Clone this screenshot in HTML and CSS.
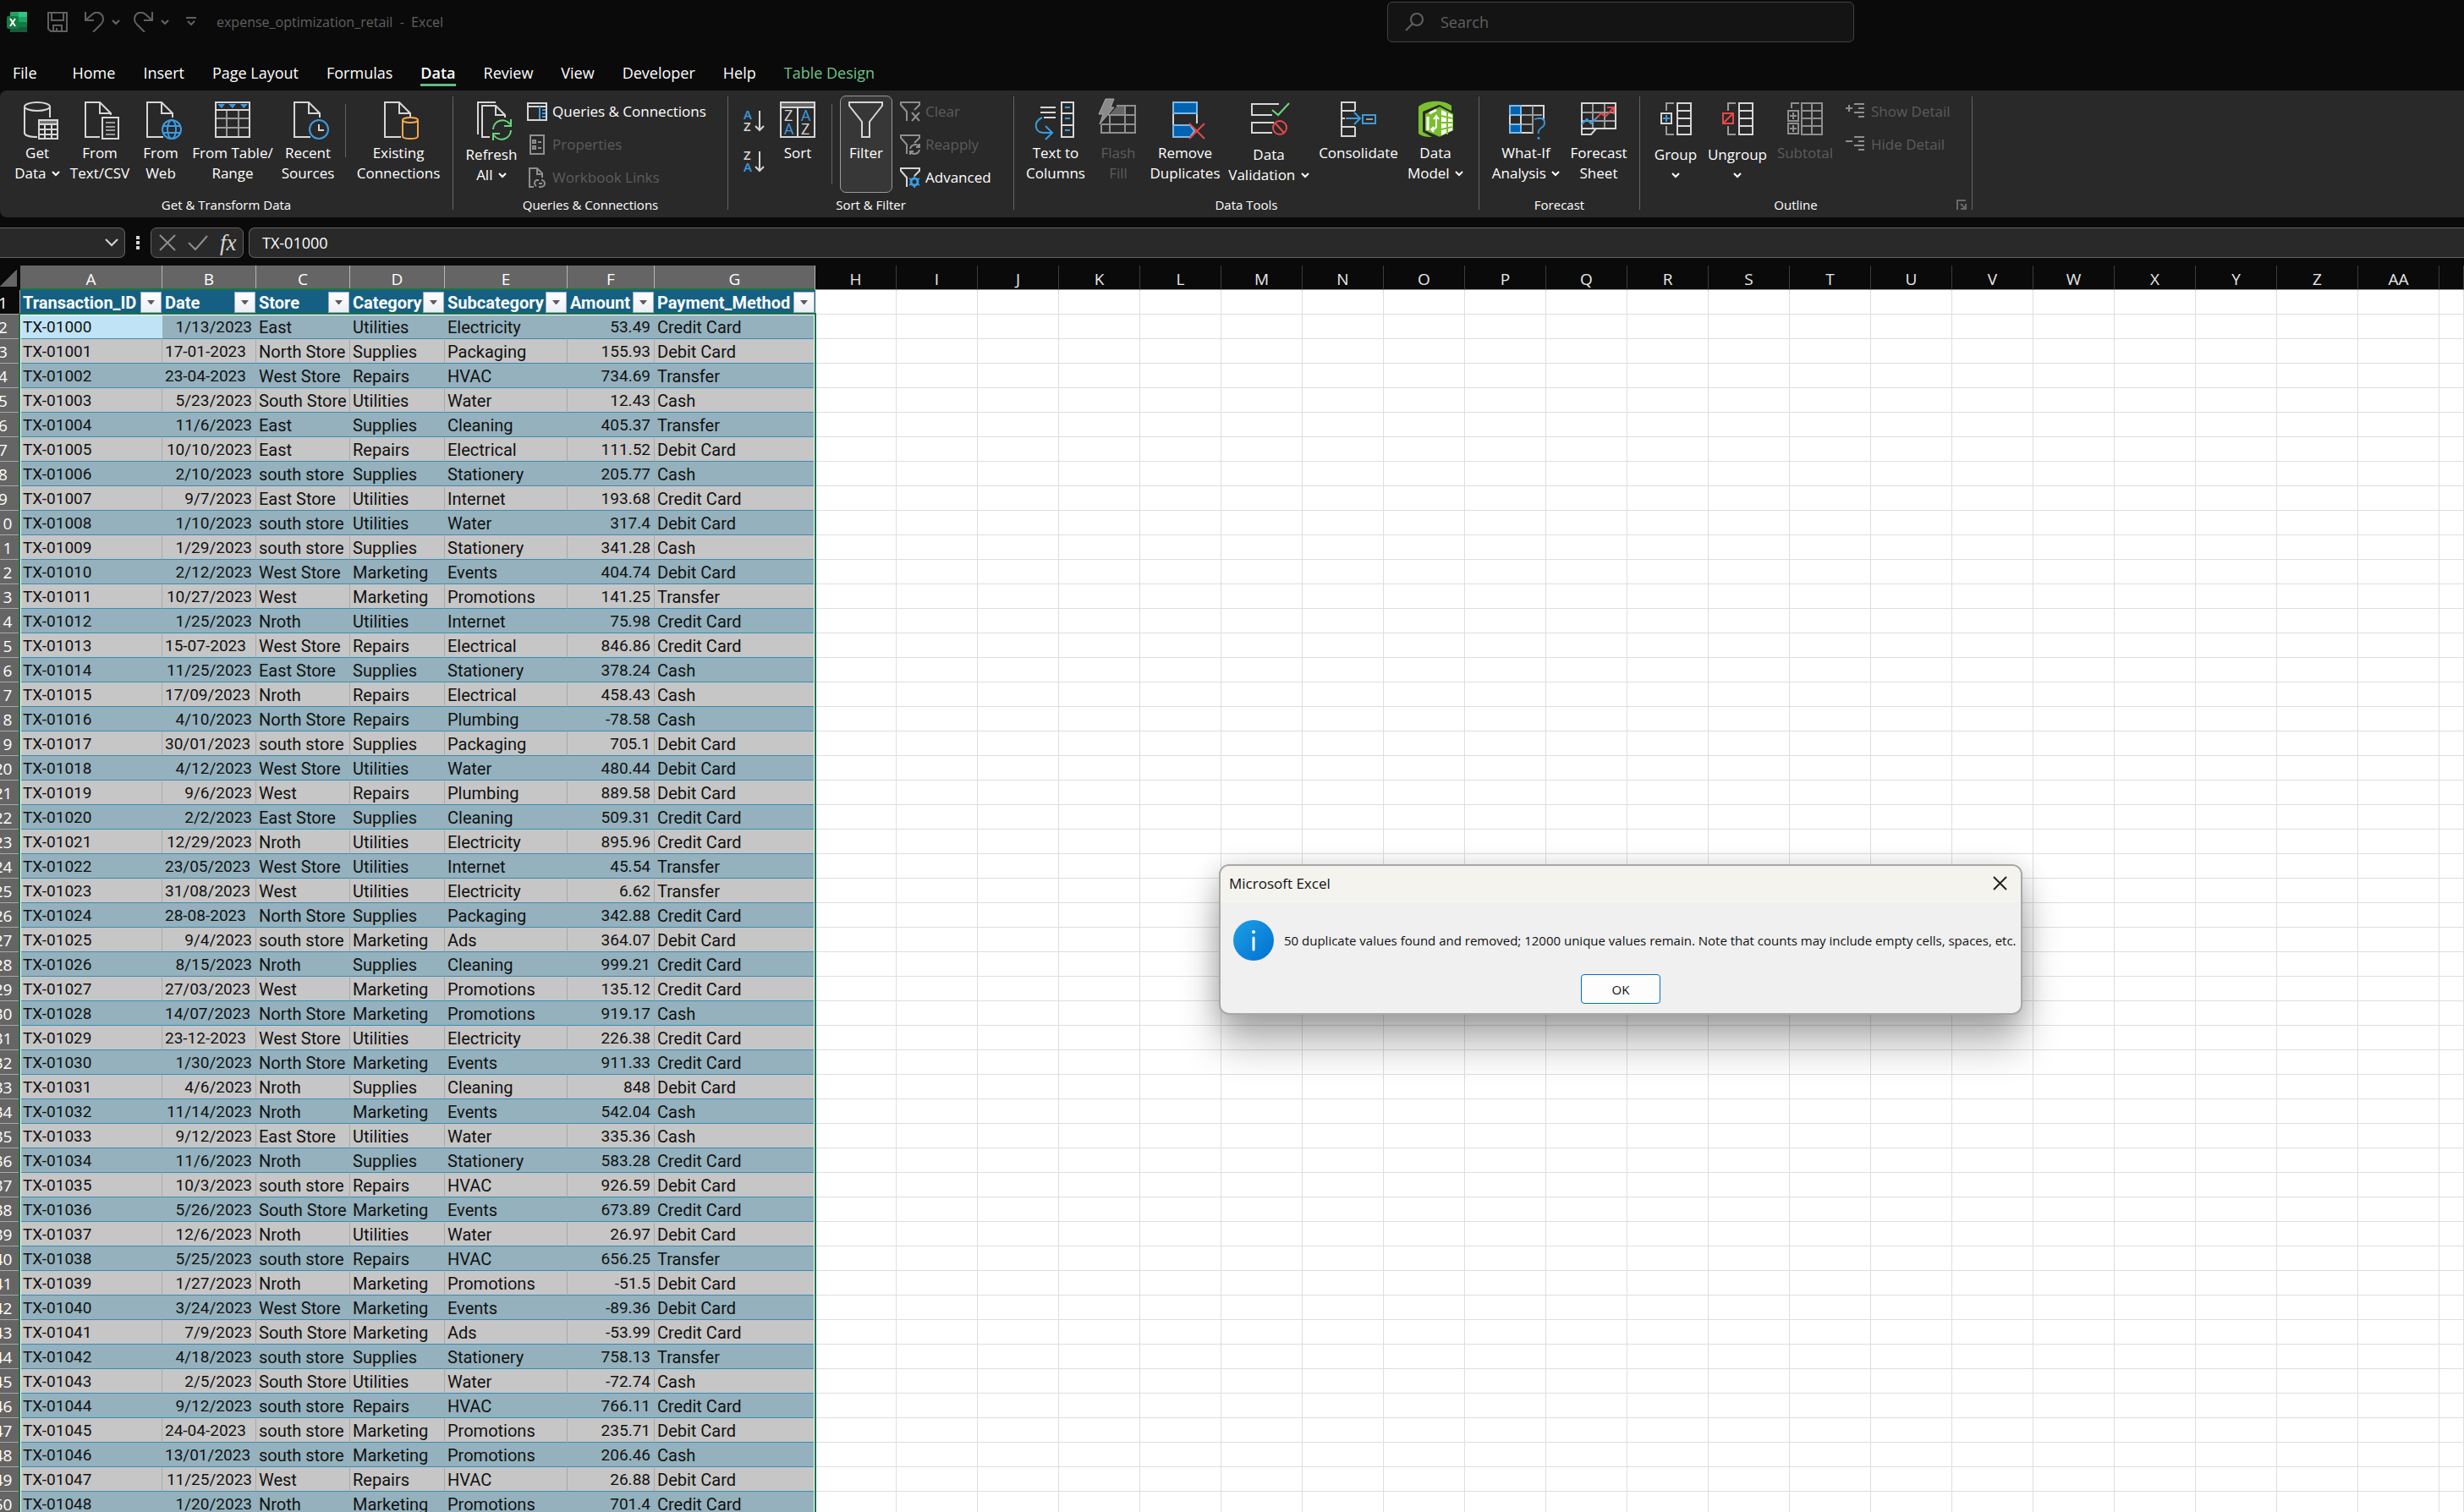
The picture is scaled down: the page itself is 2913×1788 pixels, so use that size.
FILE: index.html
```html
<!DOCTYPE html>
<html lang="en">
<head>
<meta charset="utf-8">
<title>expense_optimization_retail - Excel</title>
<link rel="stylesheet" href="styles.css">
</head>
<body>
<svg class="defs" aria-hidden="true">
  <symbol id="doc" viewBox="0 0 48 48"><path class="w" d="M27 43H8V2h17l13 13v5M25 2v13h13"/></symbol>
  <symbol id="chev" viewBox="0 0 10 8"><path d="M1 2l4 4 4-4" fill="none" stroke="currentColor" stroke-width="2"/></symbol>
  <symbol id="funnel" viewBox="0 0 24 24"><path d="M8 23V12L1 4V1h22v3l-6 6" fill="none" stroke="currentColor" stroke-width="2"/></symbol>
</svg>

<header class="title-bar">
  <div class="quick">
    <svg class="logo" width="24" height="24" viewBox="0 0 24 24" aria-label="Excel"><rect x="4" width="20" height="24" rx="1" fill="#21a366"/><path d="M14 0h9a1 1 0 0 1 1 1v5H14z" fill="#33c481"/><path d="M14 12h10v6H14z" fill="#107c41"/><path d="M4 18h20v5a1 1 0 0 1-1 1H5a1 1 0 0 1-1-1z" fill="#185c37"/><rect y="5" width="14" height="15" rx="2" fill="#107c41"/><path d="M4 8l6 9M10 8l-6 9" stroke="#fff" stroke-width="2"/></svg>
    <button class="qbtn save" aria-label="Save"><svg width="24" height="24" viewBox="0 0 24 24"><path d="M1 1h22v22H4l-3-3zM5 1v9h14V1M7 23v-7h10v7M11 19v4"/></svg></button>
    <button class="qbtn undo" aria-label="Undo"><svg width="24" height="24" viewBox="0 0 24 24"><path d="M1 0v10h10M1 10L9 3c6-5 13-1 13 6 0 3-1 4-3 6l-9 9"/></svg></button>
    <button class="qbtn" aria-label="Undo list"><svg width="10" height="8"><use href="#chev"/></svg></button>
    <button class="qbtn redo" aria-label="Redo"><svg width="24" height="24" viewBox="0 0 24 24"><path d="M22 0v10H12M22 10l-8-7C8-2 1 2 1 9c0 3 1 4 3 6l9 9"/></svg></button>
    <button class="qbtn" aria-label="Redo list"><svg width="10" height="8"><use href="#chev"/></svg></button>
    <button class="qbtn more" aria-label="Customize toolbar"><svg width="12" height="12" viewBox="0 0 12 12"><path d="M0 1h12M2 5l4 4 4-4"/></svg></button>
    <span class="file-name">expense_optimization_retail&nbsp; -&nbsp; Excel</span>
  </div>
  <label class="search">
    <svg width="22" height="22" viewBox="0 0 22 22"><circle cx="14" cy="8" r="7"/><path d="M9 13l-8 8"/></svg>
    <input type="search" placeholder="Search" aria-label="Search">
  </label>
</header>

<nav class="tabs">
  <a href="#file" class="file">File</a>
  <a href="#home">Home</a>
  <a href="#insert">Insert</a>
  <a href="#layout">Page Layout</a>
  <a href="#formulas">Formulas</a>
  <a href="#data" class="active">Data</a>
  <a href="#review">Review</a>
  <a href="#view">View</a>
  <a href="#developer">Developer</a>
  <a href="#help">Help</a>
  <a href="#design" class="context">Table Design</a>
</nav>

<section class="ribbon">
  <div class="group g-get">
    <div class="tools">
      <button class="big w72"><svg class="i" viewBox="0 0 48 48"><ellipse class="w" cx="24" cy="7" rx="15" ry="5"/><path class="w" d="M9 7v31c0 3 6 5 15 5M39 7v13"/><path d="M26 22h22v5H26z" fill="#777"/><path class="w" d="M26 23h22v22H26zM26 28h22M26 34h22M26 40h22M33 28v17M41 28v17"/></svg><span>Get</span><span>Data <svg class="chev"><use href="#chev"/></svg></span></button>
      <button class="big w76"><svg class="i" viewBox="0 0 48 48"><path class="w" d="M24 43H7V2h17l13 13v2M24 2v13h13"/><path class="w" d="M27 20h19v25H27z"/><path class="g" d="M31 26h11M31 31h11M31 35h11M31 40h11"/></svg><span>From</span><span>Text/CSV</span></button>
      <button class="big w68"><svg class="i" viewBox="0 0 48 48"><use href="#doc"/><g class="b"><circle cx="37" cy="34" r="11"/><ellipse cx="37" cy="34" rx="5" ry="11"/><path d="M27 30h20M27 38h20"/></g></svg><span>From</span><span>Web</span></button>
      <button class="big w102"><svg class="i" viewBox="0 0 48 48"><path class="g" d="M17 11v32M31 11v32M4 21h40M4 32h40"/><path class="w" d="M4 2h40v41H4zM4 11h40"/><path d="M6 4h9l-4 5zM19 4h9l-4 5zM33 4h9l-5 5z" fill="#3a9be0"/></svg><span>From Table/</span><span>Range</span></button>
      <button class="big w76"><svg class="i" viewBox="0 0 48 48"><use href="#doc"/><circle class="b" cx="37" cy="34" r="11"/><path class="w" d="M37 28v7h6"/></svg><span>Recent</span><span>Sources</span></button>
      <i class="rule short"></i>
      <button class="big w112"><svg class="i" viewBox="0 0 48 48"><use href="#doc"/><g class="o"><ellipse cx="38" cy="23" rx="9" ry="3"/><path d="M29 23v19c0 4 18 4 18 0V23"/></g></svg><span>Existing</span><span>Connections</span></button>
    </div>
    <div class="caption">Get &amp; Transform Data</div>
  </div>
  <i class="rule"></i>
  <div class="group g-query">
    <div class="tools">
      <button class="big w74 split"><svg class="i" viewBox="0 0 48 48"><path class="w" d="M8 40V2h21M22 43h-9V6h16l11 11v3M29 6v11h11"/><g class="n"><path d="M26 34a11 11 0 0 1 20-6M47 35a11 11 0 0 1-20 6M47 22v8h-8M26 47v-8h8"/></g></svg><span>Refresh</span><span>All <svg class="chev"><use href="#chev"/></svg></span></button>
      <div class="list">
        <button class="small"><svg viewBox="0 0 24 24"><path class="w" d="M1 2h22v20H1zM1 6h22"/><path class="b" d="M15 6v15M18 10h4M18 14h4M18 18h4"/></svg>Queries &amp; Connections</button>
        <button class="small" disabled><svg viewBox="0 0 24 24"><path class="d" d="M4 1h16v22H4zM7 7h3v3H7zM7 14h3v3H7zM13 9h4M13 16h4"/></svg>Properties</button>
        <button class="small" disabled><svg viewBox="0 0 24 24"><path class="d" d="M8 23H3V1h9l6 6v5M12 1v7h6M11 22a4 4 0 0 1 0-7h3M17 15a4 4 0 0 1 0 8h-3M14 19h4"/></svg>Workbook Links</button>
      </div>
    </div>
    <div class="caption">Queries &amp; Connections</div>
  </div>
  <i class="rule"></i>
  <div class="group g-sort">
    <div class="tools">
      <div class="az">
        <button aria-label="Sort A to Z"><svg width="26" height="30" viewBox="0 0 26 30"><text x="1" y="14" fill="#3a9be0">A</text><text x="1" y="28" fill="#d6d6d6">Z</text><path class="w" d="M20 4v23M15 22l5 5 5-5"/></svg></button>
        <button aria-label="Sort Z to A"><svg width="26" height="30" viewBox="0 0 26 30"><text x="1" y="14" fill="#d6d6d6">Z</text><text x="1" y="28" fill="#3a9be0">A</text><path class="w" d="M20 4v23M15 22l5 5 5-5"/></svg></button>
      </div>
      <button class="big w72"><svg class="i" viewBox="0 0 48 48"><path d="M4 2h40v6H4z" fill="#666"/><path class="w" d="M4 2h40v41H4zM4 8h40M24 8v35"/><g font-size="18"><text x="8" y="24" fill="#d6d6d6">Z</text><text x="8" y="40" fill="#3a9be0">A</text><text x="28" y="24" fill="#3a9be0">A</text><text x="28" y="40" fill="#d6d6d6">Z</text></g></svg><span>Sort</span></button>
      <i class="rule mid"></i>
      <button class="big filter" aria-pressed="true"><svg class="i" viewBox="0 0 48 48"><path class="w" d="M4 2h39v4L28 25v18h-9V25L4 6z"/></svg><span>Filter</span></button>
      <div class="list">
        <button class="small" disabled><svg viewBox="0 0 24 24"><use href="#funnel"/><path class="d" d="M14 13l9 10M23 13l-9 10"/></svg>Clear</button>
        <button class="small" disabled><svg viewBox="0 0 24 24"><use href="#funnel"/><path class="d" d="M12 17a6 6 0 0 1 11-2M23 18a6 6 0 0 1-11 2M23 11v4h-4M12 24v-4h4"/></svg>Reapply</button>
        <button class="small"><svg viewBox="0 0 24 24"><use href="#funnel"/><circle cx="17" cy="17" r="4" fill="none" stroke="#3a9be0" stroke-width="3"/><path class="b" d="M17 10v3M17 21v3M11 13l3 2M20 19l3 2M11 21l3-2M20 15l3-2"/></svg>Advanced</button>
      </div>
    </div>
    <div class="caption">Sort &amp; Filter</div>
  </div>
  <i class="rule"></i>
  <div class="group g-tools">
    <div class="tools">
      <button class="big w82"><svg class="i" viewBox="0 0 48 48"><path class="w" d="M6 8h18M6 14h18M10 20h14M31 2h14v41H31zM31 15h14M31 29h14"/><path class="b" d="M35 8h6M35 21h6M35 35h6M8 20C-3 25-1 38 10 38h9M12 30l8 8-8 8"/></svg><span>Text to</span><span>Columns</span></button>
      <button class="big w66" disabled><svg class="i" viewBox="0 0 48 48"><path d="M18 12l5-6h9v10H14z" fill="#666"/><path class="d" d="M22 6h22v32H4V28M14 18v20M32 6v32M12 17h32M4 28h40"/><path d="M9-2h10l-4 10h4L2 28l4-12H1z" fill="#8a8a8a" stroke="#aaa"/></svg><span>Flash</span><span>Fill</span></button>
      <button class="big w92"><svg class="i" viewBox="0 0 48 48"><path class="w" d="M10 15v14M38 15v12"/><path d="M10 2h28v13H10zM10 29h20l5 7-5 7H10z" fill="#0063b1" stroke="#7db9e8" stroke-width="2"/><path class="r" d="M29 27l18 18M47 27L29 45"/></svg><span>Remove</span><span>Duplicates</span></button>
      <button class="big w106 split"><svg class="i" viewBox="0 0 48 48"><path class="w" d="M36 4H4v13h24M30 26H4v12h24"/><path class="n" d="M28 11l7 6L48 3"/><g class="r"><circle cx="37" cy="32" r="8"/><path d="M31 26l11 12"/></g></svg><span>Data</span><span>Validation <svg class="chev"><use href="#chev"/></svg></span></button>
      <button class="big w106"><svg class="i" viewBox="0 0 48 48"><path class="w" d="M20 12V2H4v40h16V31M4 12h16M4 31h16M4 21h4"/><path class="b" d="M9 21h16M19 14l7 7-7 7M29 17h15v10H29z"/><path class="g" d="M33 22h8"/></svg><span>Consolidate</span></button>
      <button class="big w76"><svg class="i" viewBox="0 0 48 48"><path d="M4 7c10-8 30-8 39-1v12L28 5 9 13v24l11 6C12 43 8 42 4 39z" fill="#7cbf2e"/><path d="M11 15l18-9 17 9v21l-17 8-18-8z" fill="#7cbf2e" stroke="#292929" stroke-width="2"/><path d="M31 11l13 6v18l-13 6z" fill="#fff"/><path d="M31 18l13 3M31 26h13M31 34l13-3M38 12v28" stroke="#7cbf2e" stroke-width="2"/><path d="M15 19v16M17 15l8-4" stroke="#fff" stroke-width="3" fill="none"/><path d="M25 19v10c0 4-2 5-5 5M22 22l3-4 3 4M22 31l-3 3 3 3" stroke="#fff" stroke-width="2" fill="none"/></svg><span>Data</span><span>Model <svg class="chev"><use href="#chev"/></svg></span></button>
    </div>
    <div class="caption">Data Tools</div>
  </div>
  <i class="rule"></i>
  <div class="group g-forecast">
    <div class="tools">
      <button class="big w88"><svg class="i" viewBox="0 0 48 48"><path class="w" d="M45 22V6H5v32h28"/><path class="g" d="M32 6v32M5 17h38M5 28h28"/><path d="M5 6h13v11H5zM5 28h13v10H5z" fill="#0063b1" stroke="#7db9e8" stroke-width="2"/><path class="w" d="M5 17v11M18 17v11"/><text x="33" y="46" font-size="36" font-weight="300" fill="#3a9be0">?</text></svg><span>What-If</span><span>Analysis <svg class="chev"><use href="#chev"/></svg></span></button>
      <button class="big w84"><svg class="i" viewBox="0 0 48 48"><path class="g" d="M17 3v30M31 3v30M4 14h40M4 24h40"/><path class="w" d="M4 3h40v30H4zM4 33v7h11l6-7"/><path class="b" d="M4 28l6-6 5 5 8-8"/><path class="r" d="M22 20l5-5 5 4L42 8M34 8h8v8"/></svg><span>Forecast</span><span>Sheet</span></button>
    </div>
    <div class="caption">Forecast</div>
  </div>
  <i class="rule"></i>
  <div class="group g-outline">
    <div class="tools">
      <button class="big w72 split"><svg class="i" viewBox="0 0 48 48"><path class="g" d="M22 3h-9v9M13 30v10h9"/><path class="w" d="M26 3h16v37H26zM26 12h16M26 21h16M26 30h16M7 15h12v12H7z"/><path class="b" d="M13 17v8M9 21h8"/></svg><span>Group</span><span class="drop"><svg class="chev"><use href="#chev"/></svg></span></button>
      <button class="big w74 split"><svg class="i" viewBox="0 0 48 48"><path class="g" d="M22 3h-9v9M13 30v10h9"/><path class="w" d="M26 3h16v37H26zM26 12h16M26 21h16M26 30h16"/><path class="r" d="M7 15h12v12H7zM8 26l10-10"/></svg><span>Ungroup</span><span class="drop"><svg class="chev"><use href="#chev"/></svg></span></button>
      <button class="big w86" disabled><svg class="i" viewBox="0 0 48 48"><path class="d" d="M20 3h24v37H20zM20 12h24M20 21h24M20 30h24M32 3v37M17 3H8v6M4 12h12v12H4zM4 27h12v12H4zM10 14v8M6 18h8M10 29v8M6 33h8"/></svg><span>Subtotal</span></button>
      <div class="list">
        <button class="small" disabled><svg viewBox="0 0 24 24"><path class="d" d="M0 8h8M4 4v8M10 3h12M15 8h7M10 13h12M15 18h7"/></svg>Show Detail</button>
        <button class="small" disabled><svg viewBox="0 0 24 24"><path class="d" d="M0 8h8M10 3h12M15 8h7M10 13h12M15 18h7"/></svg>Hide Detail</button>
      </div>
    </div>
    <div class="caption">Outline<button class="launcher" aria-label="Outline settings"><svg width="12" height="12" viewBox="0 0 12 12"><path d="M1 12V1h10M5 5l6 6M11 5v6H5"/></svg></button></div>
  </div>
  <i class="rule"></i>
</section>

<section class="formula-bar">
  <div class="name-box"><input type="text" aria-label="Name box"><button aria-label="Name list"><svg width="16" height="10" viewBox="0 0 16 10"><path class="w" d="M1 1l7 7 7-7"/></svg></button></div>
  <svg class="grip" width="4" height="16" viewBox="0 0 4 16"><path d="M2 0v4M2 6v4M2 12v4" stroke="#d6d6d6" stroke-width="4"/></svg>
  <div class="entry">
    <button aria-label="Cancel"><svg width="20" height="20" viewBox="0 0 20 20"><path class="d" d="M1 1l18 18M19 1L1 19"/></svg></button>
    <button aria-label="Enter"><svg width="24" height="20" viewBox="0 0 24 20"><path class="d" d="M1 10l8 8L23 2"/></svg></button>
    <button class="fx" aria-label="Insert function">fx</button>
  </div>
  <input class="formula" type="text" value="TX-01000" aria-label="Formula">
</section>

<main class="sheet">
  <table class="grid">
    <colgroup id="cols"></colgroup>
    <thead><tr id="letters"></tr></thead>
    <tbody id="rows"></tbody>
  </table>
  <div class="selection"></div>
</main>

<div class="dialog" role="dialog" aria-labelledby="dlg-title">
  <div class="dialog-head"><span id="dlg-title">Microsoft Excel</span><button aria-label="Close"><svg width="17" height="17" viewBox="0 0 17 17"><path d="M1 1l15 15M16 1L1 16" stroke="#222" stroke-width="2"/></svg></button></div>
  <div class="dialog-body">
    <svg width="48" height="48" viewBox="0 0 48 48" aria-hidden="true"><defs><linearGradient id="info" x1="0" y1="0" x2="1" y2="1"><stop offset="0" stop-color="#1ea0e6"/><stop offset="1" stop-color="#0070d0"/></linearGradient></defs><circle cx="24" cy="24" r="24" fill="url(#info)"/><circle cx="24" cy="14" r="2" fill="#fff"/><path d="M24 21v14" stroke="#fff" stroke-width="3" stroke-linecap="round"/></svg>
    <p>50 duplicate values found and removed; 12000 unique values remain. Note that counts may include empty cells, spaces, etc.</p>
  </div>
  <button class="ok">OK</button>
</div>
<script src="sheet.js"></script>
</body>
</html>
```

FILE: styles.css
```css
* { box-sizing: border-box; }
html, body { height: 100%; }
body {
  margin: 0;
  display: flex;
  flex-direction: column;
  position: relative;
  overflow: hidden;
  background: #0a0a0a;
  color: #fff;
  font: 17px/24px "Open Sans", "Noto Sans", sans-serif;
}
button, input { font: inherit; color: inherit; }
button { background: none; border: 0; padding: 0; }
.defs { position: absolute; width: 0; height: 0; }
svg { flex: none; }

.w, .g, .b, .n, .r, .o, .d { fill: none; stroke-width: 2; }
.w { stroke: #d6d6d6; }
.g { stroke: #9a9a9a; }
.b { stroke: #3a9be0; }
.n { stroke: #6cd47e; }
.r { stroke: #e8484a; }
.o { stroke: #f2a94a; }
.d { stroke: #8f8f8f; }

/* Title bar */
.title-bar {
  display: grid;
  grid-template-columns: 1640fr 552px 721fr;
  height: 56px;
  flex: none;
}
.quick { display: flex; align-items: center; padding-left: 8px; color: #666; height: 52px; }
.qbtn { display: flex; }
.qbtn path { fill: none; stroke: #606060; stroke-width: 2; }
.save { margin-left: 24px; }
.undo { margin: 0 8px 0 20px; }
.redo { margin: 0 8px 0 16px; }
.more { margin-left: 20px; }
.file-name { margin-left: 24px; font-size: 16px; color: #606060; }
.search {
  display: flex;
  align-items: center;
  gap: 20px;
  height: 48px;
  margin-top: 2px;
  padding: 0 20px;
  border: 1px solid #424242;
  border-radius: 6px;
  background: #141414;
}
.search svg { fill: none; stroke: #606060; stroke-width: 2; }
.search input { flex: 1; border: 0; outline: 0; padding: 0; background: none; font-size: 18px; }
.search input::placeholder { color: #606060; opacity: 1; }

/* Tabs */
.tabs { display: flex; gap: 33px; height: 51px; flex: none; padding-left: 15px; font-size: 18px; }
.tabs a { color: #fff; text-decoration: none; height: 46px; padding-top: 18px; border-bottom: 3px solid transparent; }
.tabs .file { margin-right: 9px; }
.tabs .active { font-weight: 600; border-color: #62bd83; }
.tabs .context { color: #6cc48c; }

/* Ribbon */
.ribbon { display: flex; height: 150px; flex: none; background: #292929; border-radius: 8px 0 0 8px; }
.rule { flex: none; width: 1px; margin: 7px 0 9px; background: #636363; }
.rule.short { margin: 10px 6px 42px; }
.rule.mid { margin: 10px 9px 10px 4px; }
.group { display: flex; flex-direction: column; flex: none; }
.g-get { width: 535px; }
.g-query { width: 324px; }
.g-sort { width: 337px; }
.g-tools { width: 549px; }
.g-forecast { width: 189px; }
.g-outline { width: 392px; }
.tools { display: flex; height: 121px; padding: 6px 0 0 8px; }
.g-sort .tools { padding-left: 14px; }
.g-forecast .tools { padding-left: 11px; }
.g-outline .tools { padding-left: 6px; }
.caption { display: flex; justify-content: center; position: relative; padding-top: 2px; font-size: 15px; }
.g-outline .caption { padding-right: 24px; }
.launcher { position: absolute; right: 6px; top: 8px; display: flex; }
.launcher path { fill: none; stroke: #6a6a6a; stroke-width: 2; }
.big { display: flex; flex-direction: column; align-items: center; flex: none; padding-top: 6px; height: 115px; }
.big > span { height: 24px; white-space: nowrap; }
.i { width: 48px; height: 48px; margin-bottom: 2px; overflow: visible; }
.split .i { margin-bottom: 4px; }
.chev { width: 10px; height: 8px; margin-left: 2px; vertical-align: 2px; }
.drop .chev { margin-left: 0; }
.w66 { width: 66px; }
.w68 { width: 68px; }
.w72 { width: 72px; }
.w74 { width: 74px; }
.w76 { width: 76px; }
.w82 { width: 82px; }
.w84 { width: 84px; }
.w86 { width: 86px; }
.w88 { width: 88px; }
.w92 { width: 92px; }
.w102 { width: 102px; }
.w106 { width: 106px; }
.w112 { width: 112px; }
.big:disabled, .small:disabled { color: #5c5c5c; }
.filter { width: 62px; padding-top: 5px; border: 1px solid #9a9a9a; border-radius: 7px; background: #373737; }
.list { display: flex; flex-direction: column; gap: 15px; padding: 7px 0 0 5px; }
.filter + .list { padding-left: 9px; }
.small { display: flex; align-items: center; gap: 6px; white-space: nowrap; }
.small svg { width: 24px; height: 24px; color: #d6d6d6; overflow: visible; }
.small:disabled svg { color: #8f8f8f; }
.az { display: flex; flex-direction: column; gap: 18px; width: 32px; padding-top: 14px; }
.az button { display: flex; justify-content: center; }
.az svg { overflow: visible; }
.az text { font-size: 15px; font-weight: 600; }

/* Formula bar */
.formula-bar { display: flex; align-items: center; flex: none; height: 57px; padding-top: 2px; }
.name-box, .entry, .formula { height: 36px; border: 1px solid #636363; background: #292929; }
.name-box { display: flex; align-items: center; width: 148px; padding-right: 8px; border-left: 0; border-radius: 0 7px 7px 0; }
.name-box input { width: 124px; border: 0; background: none; }
.name-box button { display: flex; }
.grip { margin: 0 13px; }
.entry { display: flex; align-items: center; width: 110px; border-radius: 7px; padding-left: 9px; gap: 14px; }
.entry button { display: flex; }
.entry .fx { font: italic 27px/30px "Liberation Serif", serif; color: #d6d6d6; }
.formula { flex: 1; margin-left: 6px; padding: 0 15px; border-radius: 7px 0 0 7px; border-right: 0; font-size: 18px; }

/* Sheet */
.sheet { flex: 1; min-height: 0; overflow: hidden; position: relative; background: #fff; }
.grid { width: calc(100% + 16px); margin-left: -16px; table-layout: fixed; border-collapse: separate; border-spacing: 0; }
.grid th, .grid td { height: 29px; padding: 2px 0 0; border: 0 solid #dedede; border-width: 0 1px 1px 0; white-space: nowrap; line-height: 26px; }
.grid thead th { padding-top: 4px; line-height: 24px; background: #0a0a0a; color: #e8e8e8; border-color: #3c3c3c; border-bottom-color: #9a9a9a; font-size: 19px; font-weight: 400; }
.grid thead .on { background: #656565; color: #fff; border-color: #b5b5b5; }
.grid thead .corner { border-color: #0a0a0a; background: linear-gradient(135deg, transparent 50%, #656565 50%) 16px 5px / 20px 20px no-repeat #0a0a0a; }
.grid tbody th { background: #656565; color: #fff; border-color: #a8a8a8; font-size: 19px; font-weight: 400; }
.grid tbody .off { background: #0a0a0a; }
.grid tbody .name { padding: 0; background: #156082; border-color: #156082; font: 700 20px/26px Roboto, sans-serif; }
.name div { display: flex; justify-content: space-between; height: 28px; padding: 2px 0 1px 3px; text-align: left; }
.name button { display: flex; justify-content: center; align-items: center; width: 25px; height: 25px; border: 1px solid #a3abba; background: linear-gradient(#fff, #eceff6); }
.grid .val { padding: 2px 4px 0 3px; color: #111; font: 20px/26px Roboto, sans-serif; border-bottom-color: #3a8db2; }
.grid .odd .val { background: #94b1bd; border-right-color: #94b1bd; }
.grid .even .val { background: #c6c6c6; border-right-color: #a9a9a9; }
.grid .odd .current { background: #c0e4f5; border-right-color: #c0e4f5; }
.grid .fig { font-size: 19px; }
.num { text-align: right; }
.selection { position: absolute; left: 22px; top: 56px; width: 943px; bottom: -8px; border: 2px solid #1f7346; box-shadow: inset 0 0 0 1px #fff; }
.selection::before { content: ""; position: absolute; left: 0; right: 0; top: -31px; height: 2px; background: #1f7346; }

/* Message box */
.dialog {
  position: absolute;
  left: 1441px;
  top: 1022px;
  width: 950px;
  display: flex;
  flex-direction: column;
  padding-bottom: 11px;
  border: 2px solid #a8a8a8;
  border-radius: 12px;
  background: #f0f0f0;
  color: #111;
  overflow: hidden;
  box-shadow: 0 34px 48px rgba(0, 0, 0, .3), 0 4px 30px rgba(0, 0, 0, .18);
}
.dialog-head { display: flex; justify-content: space-between; align-items: center; height: 43px; padding: 0 16px 2px 10px; background: #f4f3ee; }
.dialog-head button { display: flex; }
.dialog-body { display: flex; align-items: center; gap: 12px; height: 48px; margin: 21px 0 16px 15px; font-size: 15px; }
.dialog-body p { margin: 0; white-space: nowrap; }
.ok { width: 94px; height: 35px; margin: 0 auto; border: 1px solid #0070c8; border-radius: 4px; background: #fdfdfd; font-size: 15px; }
```

FILE: sheet.js
```js
const widths = [40, 168, 111, 111, 112, 145, 103, 190];
const fields = ["Transaction_ID", "Date", "Store", "Category", "Subcategory", "Amount", "Payment_Method"];
const letters = "A B C D E F G H I J K L M N O P Q R S T U V W X Y Z AA AB".split(" ");
const stores = { E: "East", ES: "East Store", N: "Nroth", NS: "North Store", W: "West", WS: "West Store", SS: "South Store", ss: "south store" };
const categories = { U: "Utilities", S: "Supplies", R: "Repairs", M: "Marketing" };
const methods = { C: "Credit Card", D: "Debit Card", T: "Transfer", $: "Cash" };

// date | store | category | subcategory | amount | method, numbered from TX-01000
const records = `1/13/2023|E|U|Electricity|53.49|C
17-01-2023|NS|S|Packaging|155.93|D
23-04-2023|WS|R|HVAC|734.69|T
5/23/2023|SS|U|Water|12.43|$
11/6/2023|E|S|Cleaning|405.37|T
10/10/2023|E|R|Electrical|111.52|D
2/10/2023|ss|S|Stationery|205.77|$
9/7/2023|ES|U|Internet|193.68|C
1/10/2023|ss|U|Water|317.4|D
1/29/2023|ss|S|Stationery|341.28|$
2/12/2023|WS|M|Events|404.74|D
10/27/2023|W|M|Promotions|141.25|T
1/25/2023|N|U|Internet|75.98|C
15-07-2023|WS|R|Electrical|846.86|C
11/25/2023|ES|S|Stationery|378.24|$
17/09/2023|N|R|Electrical|458.43|$
4/10/2023|NS|R|Plumbing|-78.58|$
30/01/2023|ss|S|Packaging|705.1|D
4/12/2023|WS|U|Water|480.44|D
9/6/2023|W|R|Plumbing|889.58|D
2/2/2023|ES|S|Cleaning|509.31|C
12/29/2023|N|U|Electricity|895.96|C
23/05/2023|WS|U|Internet|45.54|T
31/08/2023|W|U|Electricity|6.62|T
28-08-2023|NS|S|Packaging|342.88|C
9/4/2023|ss|M|Ads|364.07|D
8/15/2023|N|S|Cleaning|999.21|C
27/03/2023|W|M|Promotions|135.12|C
14/07/2023|NS|M|Promotions|919.17|$
23-12-2023|WS|U|Electricity|226.38|C
1/30/2023|NS|M|Events|911.33|C
4/6/2023|N|S|Cleaning|848|D
11/14/2023|N|M|Events|542.04|$
9/12/2023|ES|U|Water|335.36|$
11/6/2023|N|S|Stationery|583.28|C
10/3/2023|ss|R|HVAC|926.59|D
5/26/2023|SS|M|Events|673.89|C
12/6/2023|N|U|Water|26.97|D
5/25/2023|ss|R|HVAC|656.25|T
1/27/2023|N|M|Promotions|-51.5|D
3/24/2023|WS|M|Events|-89.36|D
7/9/2023|SS|M|Ads|-53.99|C
4/18/2023|ss|S|Stationery|758.13|T
2/5/2023|SS|U|Water|-72.74|$
9/12/2023|ss|R|HVAC|766.11|C
24-04-2023|ss|M|Promotions|235.71|D
13/01/2023|ss|M|Promotions|206.46|$
11/25/2023|W|R|HVAC|26.88|D
1/20/2023|N|M|Promotions|701.4|C`.split("\n").map(r => r.split("|"));

const blanks = "<td></td>".repeat(letters.length - fields.length);
// Dates typed day-first stay text, so they keep to the left of the cell
const isText = date => /-/.test(date) || Number(date.split("/")[0]) > 12;

document.getElementById("cols").innerHTML = letters.map((_, i) => `<col style="width:${widths[i] || 96}px">`).join("") + "<col>";
document.getElementById("letters").innerHTML = '<th class="corner"></th>' +
  letters.map((l, i) => `<th${i < 7 ? ' class="on"' : ""}>${l === "AB" ? "" : l}</th>`).join("");

const arrow = '<svg width="9" height="5" viewBox="0 0 9 5"><path d="M0 0h9L5 5H4z" fill="#5c5c5c"/></svg>';
let html = '<tr><th class="off">1</th>' +
  fields.map(f => `<th class="name"><div>${f}<button aria-label="Filter ${f}">${arrow}</button></div></th>`).join("") + blanks + "</tr>";
records.forEach(([date, store, cat, sub, amount, pay], i) => {
  const cell = (text, cls = "") => `<td class="val ${cls}">${text}</td>`;
  html += `<tr class="${i % 2 ? "even" : "odd"}"><th>${i + 2}</th>` +
    cell("TX-0" + (1000 + i), i ? "fig" : "fig current") + cell(date, isText(date) ? "fig" : "fig num") +
    cell(stores[store]) + cell(categories[cat]) + cell(sub) + cell(amount, "fig num") + cell(methods[pay]) + blanks + "</tr>";
});
document.getElementById("rows").innerHTML = html;
```
